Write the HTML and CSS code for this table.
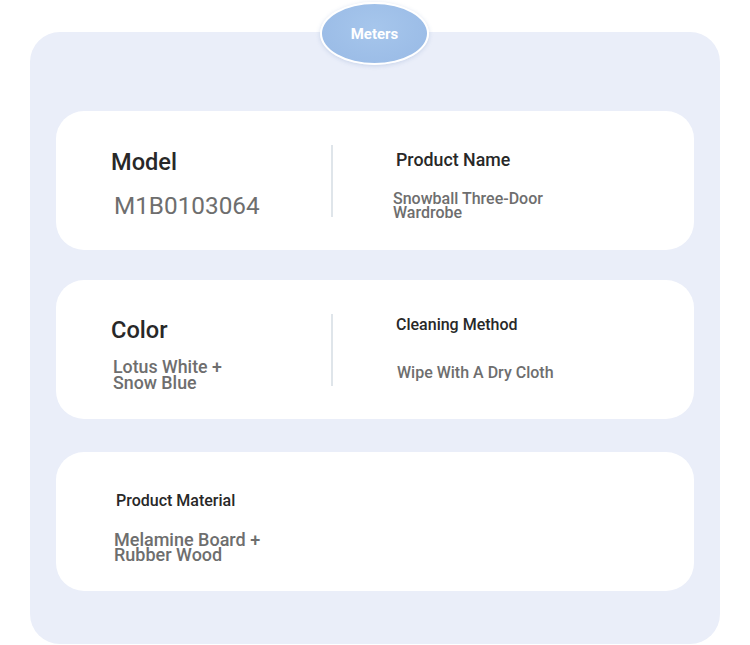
FILE: index.html
```html
<!DOCTYPE html>
<html>
<head>
<meta charset="utf-8">
<link rel="stylesheet" href="styles.css">
</head>
<body>
<div class="panel">
  <div class="pill">Meters</div>
  <div class="card card-1">
    <div class="col col-left">
      <div class="label label-lg">Model</div>
      <div class="value value-lg">M1B0103064</div>
    </div>
    <div class="divider"></div>
    <div class="col col-right">
      <div class="label label-md">Product Name</div>
      <div class="value value-sm">Snowball Three-Door<br>Wardrobe</div>
    </div>
  </div>
  <div class="card card-2">
    <div class="col col-left col-left-2">
      <div class="label label-lg">Color</div>
      <div class="value value-md">Lotus White +<br>Snow Blue</div>
    </div>
    <div class="divider"></div>
    <div class="col col-right col-right-2">
      <div class="label label-sm">Cleaning Method</div>
      <div class="value value-line">Wipe With A Dry Cloth</div>
    </div>
  </div>
  <div class="card card-3">
    <div class="col col-single">
      <div class="label label-sm">Product Material</div>
      <div class="value value-mat">Melamine Board +<br>Rubber Wood</div>
    </div>
  </div>
</div>
</body>
</html>
```

FILE: styles.css
```css
html, body {
  margin: 0;
  padding: 0;
  background: #ffffff;
  font-family: Roboto, "Liberation Sans", sans-serif;
}

.panel {
  position: relative;
  box-sizing: border-box;
  width: 690px;
  height: 612px;
  margin: 32px 0 0 30px;
  padding: 79px 26px 0 26px;
  background: #eaeef9;
  border-radius: 30px;
  display: flex;
  flex-direction: column;
}

.pill {
  position: absolute;
  left: 290px;
  top: -30px;
  width: 105px;
  height: 59px;
  border: 2.5px solid #ffffff;
  border-radius: 50%;
  background: radial-gradient(ellipse at 50% 40%, #a6c6ec 0%, #9cbde7 70%, #97b9e4 100%);
  color: #ffffff;
  font-weight: 700;
  font-size: 15px;
  display: flex;
  align-items: center;
  justify-content: center;
  box-shadow: 0 1px 4px rgba(120, 150, 200, 0.3);
}

.card {
  box-sizing: border-box;
  height: 139px;
  background: #ffffff;
  border-radius: 28px;
  display: flex;
  align-items: flex-start;
}

.card-2 { margin-top: 30px; }
.card-3 { margin-top: 33px; }

.col-left {
  width: 220px;
  padding-left: 55px;
  padding-top: 37px;
}

.col-left-2 { padding-top: 36px; }

.col-right {
  padding-left: 63px;
  padding-top: 38px;
}

.col-right-2 { padding-top: 35px; }

.col-single {
  padding-left: 60px;
  padding-top: 39px;
}

.divider {
  width: 2px;
  height: 72px;
  margin-top: 34px;
  background: #dfe5ea;
}

.label {
  color: #282828;
  font-weight: 500;
}

.label-lg { font-size: 23.6px; line-height: 28px; }
.label-md { font-size: 17.8px; line-height: 22px; }
.label-sm { font-size: 16px; line-height: 20px; }

.value {
  color: #6e6e6e;
}

.value-lg {
  font-size: 24.3px;
  line-height: 28px;
  margin-top: 16px;
  padding-left: 3px;
}

.value-sm {
  font-size: 16px;
  line-height: 14px;
  font-weight: 500;
  margin-top: 21px;
  margin-left: -3px;
}

.value-md {
  font-size: 17.8px;
  line-height: 16px;
  font-weight: 500;
  margin-top: 15px;
  padding-left: 2px;
}

.value-line {
  font-size: 16px;
  line-height: 20px;
  font-weight: 500;
  margin-top: 28px;
  padding-left: 1px;
}

.value-mat {
  font-size: 18px;
  line-height: 15px;
  font-weight: 500;
  margin-top: 21px;
  margin-left: -2px;
}
```
